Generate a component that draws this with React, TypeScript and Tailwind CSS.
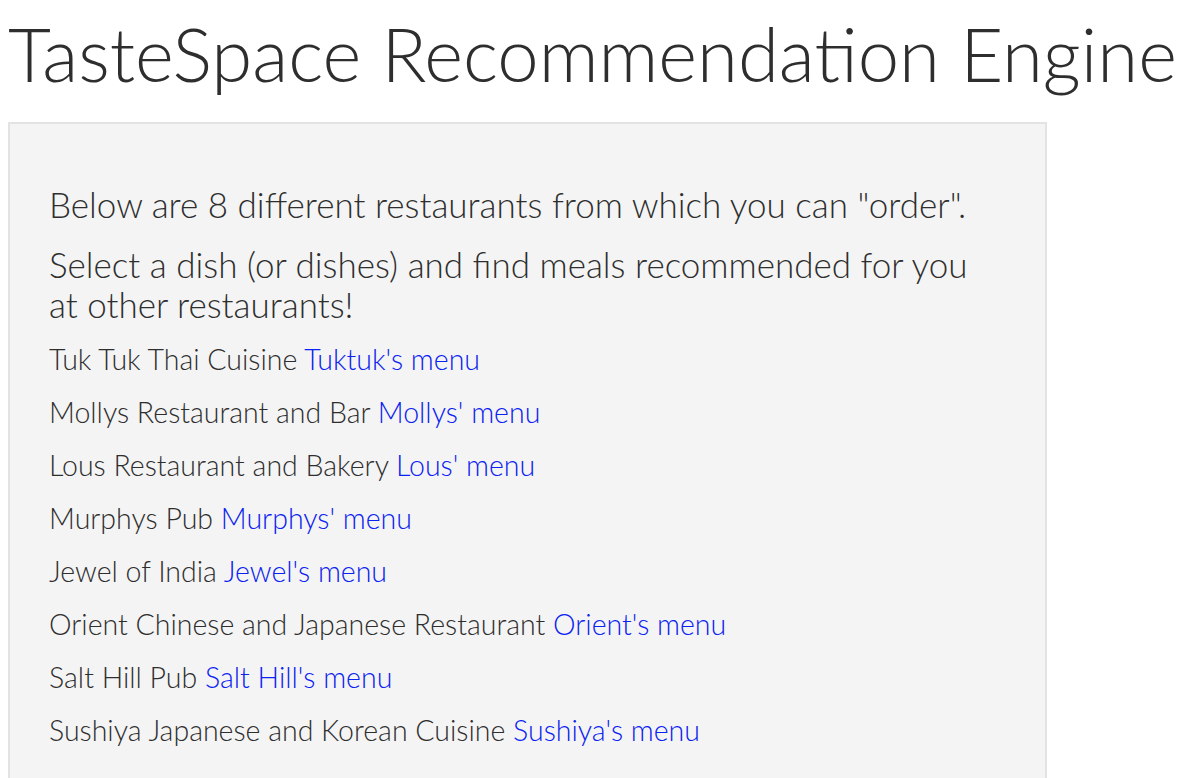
const restaurants = [
  { name: "Tuk Tuk Thai Cuisine", link: "Tuktuk's menu" },
  { name: "Mollys Restaurant and Bar", link: "Mollys' menu" },
  { name: "Lous Restaurant and Bakery", link: "Lous' menu" },
  { name: "Murphys Pub", link: "Murphys' menu" },
  { name: "Jewel of India", link: "Jewel's menu" },
  { name: "Orient Chinese and Japanese Restaurant", link: "Orient's menu" },
  { name: "Salt Hill Pub", link: "Salt Hill's menu" },
  { name: "Sushiya Japanese and Korean Cuisine", link: "Sushiya's menu" },
];

export default function App() {
  return (
    <div
      className="min-h-screen bg-white px-2 text-[#2e2e2e] font-light"
      style={{ fontFamily: '"Source Sans Pro", Lato, "Open Sans", sans-serif' }}
    >
      <h1 className="pt-[6px] pb-[20px] text-[74.3px] leading-[96px] font-light whitespace-nowrap">
        TasteSpace Recommendation Engine
      </h1>
      <div className="w-[1039px] min-h-[660px] border-2 border-[#e3e3e3] bg-[#f4f4f4] pl-[39px] pr-[30px] pt-[60px]">
        <p className="text-[35px] leading-[40px] mb-[20px] whitespace-nowrap">
          Below are 8 different restaurants from which you can "order".
        </p>
        <p className="text-[35px] leading-[40px] mb-[9px]">
          Select a dish (or dishes) and find meals recommended for you
          <br />
          at other restaurants!
        </p>
        <div className="flex flex-col">
          {restaurants.map((r) => (
            <p key={r.name} className="text-[28.5px] leading-[53px]">
              {r.name}{" "}
              <a href="#" className="text-[#0a22f2]">
                {r.link}
              </a>
            </p>
          ))}
        </div>
      </div>
    </div>
  );
}
